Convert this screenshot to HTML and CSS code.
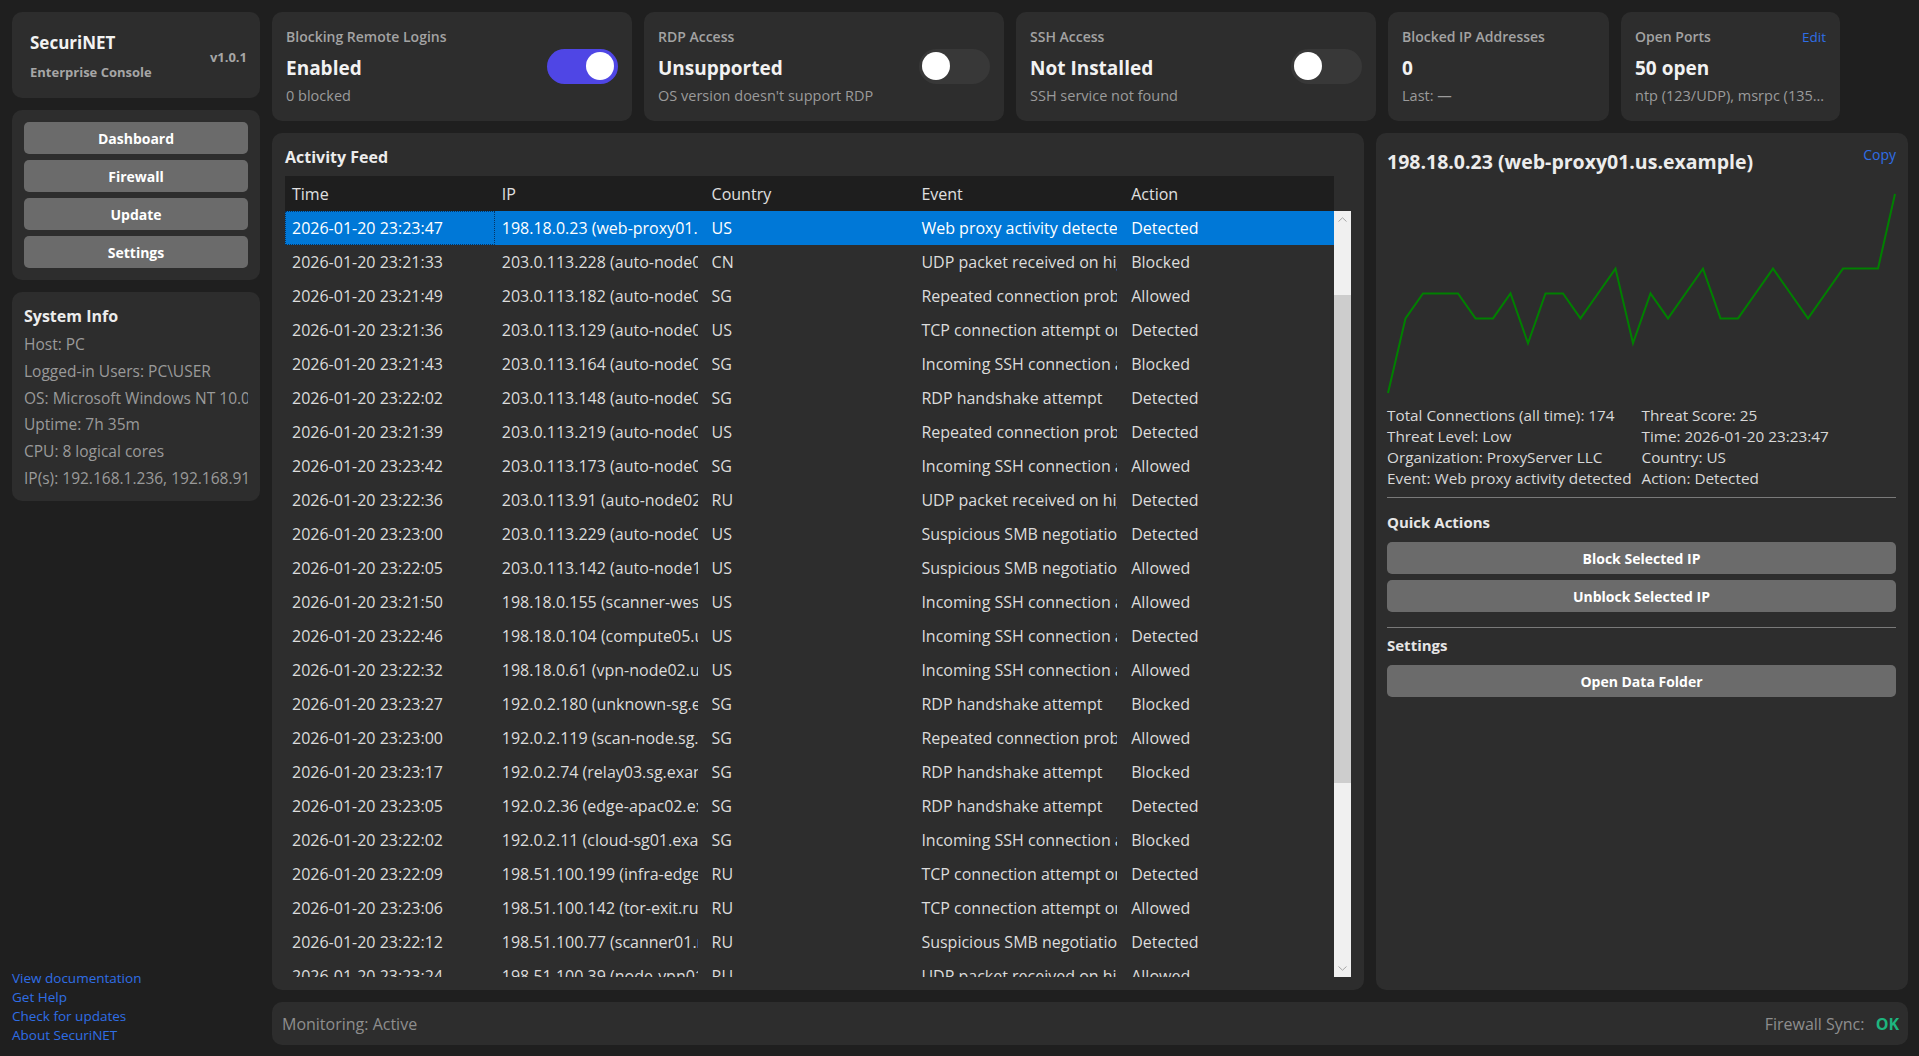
FILE: index.html
```html
<!DOCTYPE html>
<html lang="en">
<head>
<meta charset="utf-8">
<title>SecuriNET Enterprise Console</title>
<link rel="stylesheet" href="styles.css">
</head>
<body>
<aside class="sidebar">
  <div class="card brand">
    <div>
      <div class="brand-name">SecuriNET</div>
      <div class="brand-sub">Enterprise Console</div>
    </div>
    <div class="brand-ver">v1.0.1</div>
  </div>
  <nav class="card nav">
    <div class="btn">Dashboard</div>
    <div class="btn">Firewall</div>
    <div class="btn">Update</div>
    <div class="btn">Settings</div>
  </nav>
  <div class="card sysinfo">
    <h2>System Info</h2>
    <div class="line">Host: PC</div>
    <div class="line">Logged-in Users: PC\USER</div>
    <div class="line">OS: Microsoft Windows NT 10.0.26100.0</div>
    <div class="line">Uptime: 7h 35m</div>
    <div class="line">CPU: 8 logical cores</div>
    <div class="line">IP(s): 192.168.1.236, 192.168.91.1</div>
  </div>
  <div class="links">
    <a href="#">View documentation</a>
    <a href="#">Get Help</a>
    <a href="#">Check for updates</a>
    <a href="#">About SecuriNET</a>
  </div>
</aside>

<main class="main">
  <section class="stats">
    <div class="card stat">
      <div class="stat-text">
        <div class="stat-label">Blocking Remote Logins</div>
        <div class="stat-value">Enabled</div>
        <div class="stat-sub">0 blocked</div>
      </div>
      <div class="toggle on"><div class="knob"></div></div>
    </div>
    <div class="card stat">
      <div class="stat-text">
        <div class="stat-label">RDP Access</div>
        <div class="stat-value">Unsupported</div>
        <div class="stat-sub">OS version doesn't support RDP</div>
      </div>
      <div class="toggle"><div class="knob"></div></div>
    </div>
    <div class="card stat">
      <div class="stat-text">
        <div class="stat-label">SSH Access</div>
        <div class="stat-value">Not Installed</div>
        <div class="stat-sub">SSH service not found</div>
      </div>
      <div class="toggle"><div class="knob"></div></div>
    </div>
    <div class="card stat">
      <div class="stat-text">
        <div class="stat-label">Blocked IP Addresses</div>
        <div class="stat-value">0</div>
        <div class="stat-sub">Last: —</div>
      </div>
    </div>
    <div class="card stat">
      <div class="stat-text grow">
        <div class="label-row">
          <div class="stat-label">Open Ports</div>
          <a class="edit" href="#">Edit</a>
        </div>
        <div class="stat-value">50 open</div>
        <div class="stat-sub">ntp (123/UDP), msrpc (135/TCP), netbios-ssn (139/TCP)</div>
      </div>
    </div>
  </section>

  <section class="middle">
    <div class="card feed">
      <h2>Activity Feed</h2>
      <div class="thead">
        <div class="th">Time</div>
        <div class="th">IP</div>
        <div class="th">Country</div>
        <div class="th">Event</div>
        <div class="th">Action</div>
      </div>
      <div class="tbody">
        <div class="rows">
          <div class="row sel"><div class="cell focus"><span>2026-01-20 23:23:47</span></div><div class="cell"><span>198.18.0.23 (web-proxy01.us.example)</span></div><div class="cell"><span>US</span></div><div class="cell"><span>Web proxy activity detected</span></div><div class="cell"><span>Detected</span></div></div>
          <div class="row"><div class="cell"><span>2026-01-20 23:21:33</span></div><div class="cell"><span>203.0.113.228 (auto-node01.cn.example)</span></div><div class="cell"><span>CN</span></div><div class="cell"><span>UDP packet received on high port</span></div><div class="cell"><span>Blocked</span></div></div>
          <div class="row"><div class="cell"><span>2026-01-20 23:21:49</span></div><div class="cell"><span>203.0.113.182 (auto-node03.sg.example)</span></div><div class="cell"><span>SG</span></div><div class="cell"><span>Repeated connection probe</span></div><div class="cell"><span>Allowed</span></div></div>
          <div class="row"><div class="cell"><span>2026-01-20 23:21:36</span></div><div class="cell"><span>203.0.113.129 (auto-node05.us.example)</span></div><div class="cell"><span>US</span></div><div class="cell"><span>TCP connection attempt on port 445</span></div><div class="cell"><span>Detected</span></div></div>
          <div class="row"><div class="cell"><span>2026-01-20 23:21:43</span></div><div class="cell"><span>203.0.113.164 (auto-node07.sg.example)</span></div><div class="cell"><span>SG</span></div><div class="cell"><span>Incoming SSH connection attempt</span></div><div class="cell"><span>Blocked</span></div></div>
          <div class="row"><div class="cell"><span>2026-01-20 23:22:02</span></div><div class="cell"><span>203.0.113.148 (auto-node04.sg.example)</span></div><div class="cell"><span>SG</span></div><div class="cell"><span>RDP handshake attempt</span></div><div class="cell"><span>Detected</span></div></div>
          <div class="row"><div class="cell"><span>2026-01-20 23:21:39</span></div><div class="cell"><span>203.0.113.219 (auto-node09.us.example)</span></div><div class="cell"><span>US</span></div><div class="cell"><span>Repeated connection probe</span></div><div class="cell"><span>Detected</span></div></div>
          <div class="row"><div class="cell"><span>2026-01-20 23:23:42</span></div><div class="cell"><span>203.0.113.173 (auto-node06.sg.example)</span></div><div class="cell"><span>SG</span></div><div class="cell"><span>Incoming SSH connection attempt</span></div><div class="cell"><span>Allowed</span></div></div>
          <div class="row"><div class="cell"><span>2026-01-20 23:22:36</span></div><div class="cell"><span>203.0.113.91 (auto-node02.ru.example)</span></div><div class="cell"><span>RU</span></div><div class="cell"><span>UDP packet received on high port</span></div><div class="cell"><span>Detected</span></div></div>
          <div class="row"><div class="cell"><span>2026-01-20 23:23:00</span></div><div class="cell"><span>203.0.113.229 (auto-node08.us.example)</span></div><div class="cell"><span>US</span></div><div class="cell"><span>Suspicious SMB negotiation</span></div><div class="cell"><span>Detected</span></div></div>
          <div class="row"><div class="cell"><span>2026-01-20 23:22:05</span></div><div class="cell"><span>203.0.113.142 (auto-node10.us.example)</span></div><div class="cell"><span>US</span></div><div class="cell"><span>Suspicious SMB negotiation</span></div><div class="cell"><span>Allowed</span></div></div>
          <div class="row"><div class="cell"><span>2026-01-20 23:21:50</span></div><div class="cell"><span>198.18.0.155 (scanner-west.us.example)</span></div><div class="cell"><span>US</span></div><div class="cell"><span>Incoming SSH connection attempt</span></div><div class="cell"><span>Allowed</span></div></div>
          <div class="row"><div class="cell"><span>2026-01-20 23:22:46</span></div><div class="cell"><span>198.18.0.104 (compute05.us.example)</span></div><div class="cell"><span>US</span></div><div class="cell"><span>Incoming SSH connection attempt</span></div><div class="cell"><span>Detected</span></div></div>
          <div class="row"><div class="cell"><span>2026-01-20 23:22:32</span></div><div class="cell"><span>198.18.0.61 (vpn-node02.us.example)</span></div><div class="cell"><span>US</span></div><div class="cell"><span>Incoming SSH connection attempt</span></div><div class="cell"><span>Allowed</span></div></div>
          <div class="row"><div class="cell"><span>2026-01-20 23:23:27</span></div><div class="cell"><span>192.0.2.180 (unknown-sg.example)</span></div><div class="cell"><span>SG</span></div><div class="cell"><span>RDP handshake attempt</span></div><div class="cell"><span>Blocked</span></div></div>
          <div class="row"><div class="cell"><span>2026-01-20 23:23:00</span></div><div class="cell"><span>192.0.2.119 (scan-node.sg.example)</span></div><div class="cell"><span>SG</span></div><div class="cell"><span>Repeated connection probe</span></div><div class="cell"><span>Allowed</span></div></div>
          <div class="row"><div class="cell"><span>2026-01-20 23:23:17</span></div><div class="cell"><span>192.0.2.74 (relay03.sg.example)</span></div><div class="cell"><span>SG</span></div><div class="cell"><span>RDP handshake attempt</span></div><div class="cell"><span>Blocked</span></div></div>
          <div class="row"><div class="cell"><span>2026-01-20 23:23:05</span></div><div class="cell"><span>192.0.2.36 (edge-apac02.example)</span></div><div class="cell"><span>SG</span></div><div class="cell"><span>RDP handshake attempt</span></div><div class="cell"><span>Detected</span></div></div>
          <div class="row"><div class="cell"><span>2026-01-20 23:22:02</span></div><div class="cell"><span>192.0.2.11 (cloud-sg01.example)</span></div><div class="cell"><span>SG</span></div><div class="cell"><span>Incoming SSH connection attempt</span></div><div class="cell"><span>Blocked</span></div></div>
          <div class="row"><div class="cell"><span>2026-01-20 23:22:09</span></div><div class="cell"><span>198.51.100.199 (infra-edge.ru.example)</span></div><div class="cell"><span>RU</span></div><div class="cell"><span>TCP connection attempt on port 445</span></div><div class="cell"><span>Detected</span></div></div>
          <div class="row"><div class="cell"><span>2026-01-20 23:23:06</span></div><div class="cell"><span>198.51.100.142 (tor-exit.ru.example)</span></div><div class="cell"><span>RU</span></div><div class="cell"><span>TCP connection attempt on port 3389</span></div><div class="cell"><span>Allowed</span></div></div>
          <div class="row"><div class="cell"><span>2026-01-20 23:22:12</span></div><div class="cell"><span>198.51.100.77 (scanner01.ru.example)</span></div><div class="cell"><span>RU</span></div><div class="cell"><span>Suspicious SMB negotiation</span></div><div class="cell"><span>Detected</span></div></div>
          <div class="row"><div class="cell"><span>2026-01-20 23:23:24</span></div><div class="cell"><span>198.51.100.39 (node-vpn01.ru.example)</span></div><div class="cell"><span>RU</span></div><div class="cell"><span>UDP packet received on high port</span></div><div class="cell"><span>Allowed</span></div></div>
        </div>
        <div class="vscroll">
          <div class="arrow"><svg width="9" height="5" viewBox="0 0 9 5"><polyline points="0.5,4.5 4.5,0.8 8.5,4.5" fill="none" stroke="#a6a6a6" stroke-width="1"/></svg></div>
          <div class="thumb" style="margin-top:67px;height:488px"></div>
          <div class="spacer"></div>
          <div class="arrow"><svg width="9" height="5" viewBox="0 0 9 5"><polyline points="0.5,0.5 4.5,4.2 8.5,0.5" fill="none" stroke="#a6a6a6" stroke-width="1"/></svg></div>
        </div>
      </div>
    </div>

    <div class="card detail">
      <div class="detail-head">
        <div class="detail-title">198.18.0.23 (web-proxy01.us.example)</div>
        <a class="copy" href="#">Copy</a>
      </div>
      <svg class="chart" width="509" height="214" viewBox="0 0 509 214">
        <polyline fill="none" stroke="#008000" stroke-width="2" stroke-linejoin="miter" points="1,207 18.5,132.4 36,107.5 53.5,107.5 71,107.5 88.5,132.4 106,132.4 123.5,107.5 141,157.3 158.5,107.5 176,107.5 193.5,132.4 211,107.5 228.5,82.6 246,157.3 263.5,107.5 281,132.4 298.5,107.5 316,82.6 333.5,132.4 351,132.4 368.5,107.5 386,82.6 403.5,107.5 421,132.4 438.5,107.5 456,82.6 473.5,82.6 491,82.6 508,8"/>
      </svg>
      <div class="kv">
        <div>Total Connections (all time): 174</div>
        <div>Threat Score: 25</div>
        <div>Threat Level: Low</div>
        <div>Time: 2026-01-20 23:23:47</div>
        <div>Organization: ProxyServer LLC</div>
        <div>Country: US</div>
        <div>Event: Web proxy activity detected</div>
        <div>Action: Detected</div>
      </div>
      <div class="divider"></div>
      <div class="section-title">Quick Actions</div>
      <div class="actions">
        <div class="btn">Block Selected IP</div>
        <div class="btn">Unblock Selected IP</div>
      </div>
      <div class="divider second"></div>
      <div class="section-title settings">Settings</div>
      <div class="actions">
        <div class="btn">Open Data Folder</div>
      </div>
    </div>
  </section>

  <footer class="card status">
    <div>Monitoring: Active</div>
    <div>Firewall Sync: <span class="ok">OK</span></div>
  </footer>
</main>
</body>
</html>
```

FILE: styles.css
```css
* { box-sizing: border-box; }
html, body { margin: 0; }
body {
  width: 1919px;
  height: 1056px;
  overflow: hidden;
  background: #1f1f1f;
  font-family: "Open Sans", "Noto Sans", sans-serif;
  color: #e6e6e6;
  display: grid;
  grid-template-columns: 248px 1fr;
  column-gap: 12px;
  padding: 12px 11px 11px 12px;
}
a { text-decoration: none; }
.card { background: #2d2d2d; border-radius: 10px; }

/* sidebar */
.sidebar { display: flex; flex-direction: column; gap: 12px; min-height: 0; }
.brand {
  display: flex; align-items: center; justify-content: space-between;
  padding: 20px 13px 16px 18px;
}
.brand-name { font-size: 17px; font-weight: 700; line-height: 22px; color: #f2f2f2; }
.brand-sub { font-size: 13px; font-weight: 700; line-height: 20px; color: #a6a6a6; margin-top: 8px; }
.brand-ver { font-size: 13px; font-weight: 700; color: #a6a6a6; }
.nav { padding: 12px; display: flex; flex-direction: column; gap: 6px; }
.btn {
  height: 32px; border-radius: 5px; background: #6b6b6b; color: #fff;
  font-weight: 700; font-size: 14px;
  display: flex; align-items: center; justify-content: center;
}
.sysinfo { padding: 13px 12px 9px; }
.sysinfo h2 { margin: 0 0 4px; font-size: 16px; font-weight: 700; line-height: 22px; color: #ececec; }
.sysinfo .line { font-size: 15.5px; line-height: 26.8px; color: #9a9a9a; white-space: nowrap; overflow: hidden; }
.links { margin-top: auto; display: flex; flex-direction: column; }
.links a { font-size: 13.5px; line-height: 19px; color: #2f6ee6; }

/* main */
.main { display: grid; grid-template-rows: 109px 1fr 43px; row-gap: 12px; min-width: 0; min-height: 0; }
.stats { display: grid; grid-template-columns: 360px 360px 360px 221px 219px; column-gap: 12px; }
.stat { padding: 16px 14px 15px; display: flex; align-items: center; justify-content: space-between; min-width: 0; }
.stat-text { min-width: 0; }
.stat-text.grow { flex: 1; }
.label-row { display: flex; justify-content: space-between; align-items: center; }
.stat-label { font-size: 14px; font-weight: 600; color: #a3a3a3; line-height: 18px; }
.edit { font-size: 13.5px; line-height: 18px; color: #2f6ee6; }
.stat-value { font-size: 19px; font-weight: 700; color: #f2f2f2; line-height: 28px; margin-top: 8px; }
.stat-sub {
  font-size: 14.5px; color: #9b9b9b; line-height: 20px; margin-top: 4px;
  white-space: nowrap; overflow: hidden; text-overflow: ellipsis;
}
.toggle {
  flex: none; width: 71px; height: 35px; border-radius: 18px; background: #383838;
  display: flex; align-items: center; padding: 0 3px; margin-top: -2px;
}
.toggle.on { background: #4f46e5; justify-content: flex-end; padding: 0 4px; }
.knob { width: 28px; height: 28px; border-radius: 50%; background: #fff; }

.middle { display: grid; grid-template-columns: 1092px 1fr; column-gap: 12px; min-height: 0; }

/* feed */
.feed { padding: 13px; display: flex; flex-direction: column; min-height: 0; }
.feed h2 { margin: 0 0 8px; font-size: 16px; font-weight: 700; line-height: 22px; color: #ececec; }
.thead {
  display: grid; grid-template-columns: repeat(5, 1fr); height: 35px;
  background: #1e1e1e; margin-right: 17px; align-items: center; flex: none;
}
.th { padding: 0 7px; font-size: 16px; color: #e0e0e0; }
.tbody { flex: 1; display: flex; min-height: 0; }
.rows { flex: 1; overflow: hidden; min-width: 0; }
.row {
  display: grid; grid-template-columns: repeat(5, 1fr); height: 34px;
  align-items: center; font-size: 16px; color: #dcdcdc;
}
.cell { padding: 0 7px; min-width: 0; }
.cell span { display: block; overflow: hidden; white-space: nowrap; }
.row.sel { background: #0078d7; color: #fff; }
.cell.focus {
  height: 100%; display: flex; align-items: center; padding: 0 6px;
  border: 1px dotted rgba(10, 30, 60, 0.75);
}
.cell.focus span { flex: 1; }
.vscroll { width: 17px; flex: none; background: #f0f0f0; display: flex; flex-direction: column; }
.arrow { height: 17px; flex: none; display: flex; align-items: center; justify-content: center; }
.thumb { background: #cdcdcd; flex: none; }
.vscroll .spacer { flex: 1; }

/* detail */
.detail { padding: 12px 12px 12px 11px; display: flex; flex-direction: column; min-height: 0; min-width: 0; }
.detail-head { display: flex; justify-content: space-between; align-items: flex-start; }
.detail-title { font-size: 19.5px; font-weight: 700; line-height: 26px; margin-top: 4px; color: #ececec; white-space: nowrap; }
.copy { font-size: 14px; line-height: 20px; color: #2f6ee6; }
.chart { display: block; margin-top: 11px; width: 509px; height: 214px; }
.kv {
  display: grid; grid-template-columns: 1fr 1fr; margin-top: 5px;
  font-size: 15.3px; line-height: 21px; color: #d8d8d8;
}
.kv div { white-space: nowrap; }
.divider { height: 1px; background: #7a7a7a; margin-top: 8px; flex: none; }
.divider.second { margin-top: 15px; }
.section-title { font-size: 15px; font-weight: 700; line-height: 20px; margin-top: 14px; color: #e6e6e6; }
.section-title.settings { margin-top: 7px; }
.actions { display: flex; flex-direction: column; gap: 6px; margin-top: 10px; }

/* status */
.status {
  display: flex; align-items: center; justify-content: space-between;
  padding: 0 9px 0 10px; font-size: 16px; color: #8e8e8e;
}
.ok { color: #1db57f; font-weight: 700; margin-left: 7px; }
```
